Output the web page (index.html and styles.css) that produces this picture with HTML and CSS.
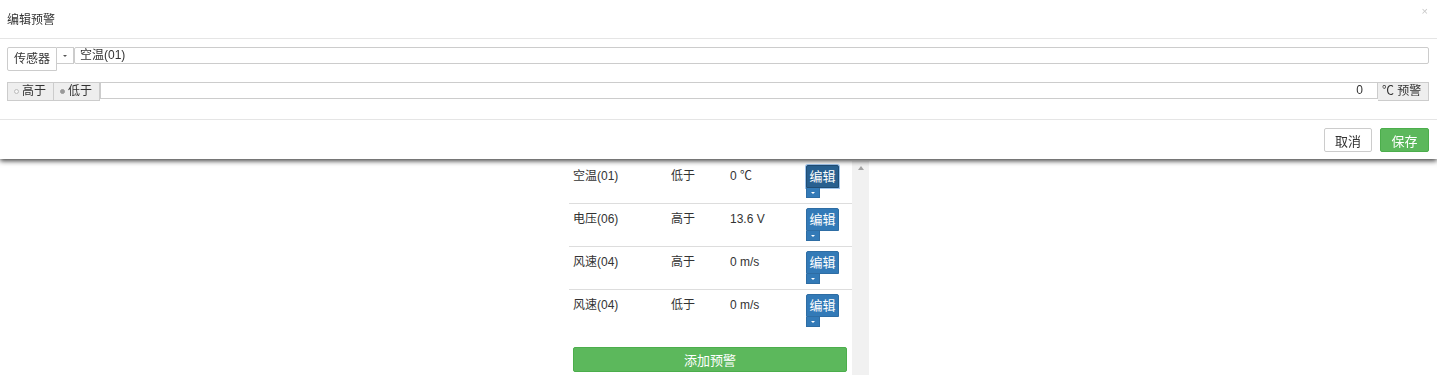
FILE: index.html
```html
<!DOCTYPE html>
<html lang="zh">
<head>
<meta charset="utf-8">
<title>编辑预警</title>
<link rel="stylesheet" href="styles.css">
</head>
<body>
<div class="page">
  <div class="panel">
    <div class="list">
      <div class="row">
        <span class="c-name">空温(01)</span><span class="c-cond">低于</span><span class="c-val">0 ℃</span>
        <div class="c-act"><button class="edit focus">编辑</button><button class="caret"><i></i></button></div>
      </div>
      <div class="row">
        <span class="c-name">电压(06)</span><span class="c-cond">高于</span><span class="c-val">13.6 V</span>
        <div class="c-act"><button class="edit">编辑</button><button class="caret"><i></i></button></div>
      </div>
      <div class="row">
        <span class="c-name">风速(04)</span><span class="c-cond">高于</span><span class="c-val">0 m/s</span>
        <div class="c-act"><button class="edit">编辑</button><button class="caret"><i></i></button></div>
      </div>
      <div class="row last">
        <span class="c-name">风速(04)</span><span class="c-cond">低于</span><span class="c-val">0 m/s</span>
        <div class="c-act"><button class="edit">编辑</button><button class="caret"><i></i></button></div>
      </div>
      <button class="add">添加预警</button>
    </div>
    <div class="scrollbar"><span class="up"></span></div>
  </div>
</div>

<div class="modal">
  <div class="modal-header">
    <span class="modal-title">编辑预警</span>
    <span class="close">×</span>
  </div>
  <div class="modal-body">
    <div class="line1">
      <button class="btn-sensor">传感器</button>
      <button class="btn-drop"><i></i></button>
      <div class="input sensor-input">空温(01)</div>
    </div>
    <div class="line2">
      <span class="addon radio-addon"><span class="dot"></span>高于</span>
      <span class="addon radio-addon second"><span class="dot on"></span>低于</span>
      <div class="input value-input">0</div>
      <span class="addon unit">℃ 预警</span>
    </div>
  </div>
  <div class="modal-footer">
    <button class="btn-cancel">取消</button>
    <button class="btn-save">保存</button>
  </div>
</div>
</body>
</html>
```

FILE: styles.css
```css
* { box-sizing: border-box; }
html, body { margin: 0; padding: 0; background: #fff; }
body {
  font-family: "Liberation Sans", "Noto Sans CJK SC", sans-serif;
  font-size: 12px;
  color: #333;
  height: 375px;
  overflow: hidden;
}
button { font-family: inherit; font-size: 12px; margin: 0; cursor: pointer; }

/* background page */
.page { padding-top: 161px; }
.panel {
  width: 301px;
  margin: 0 auto;
  display: flex;
  height: 214px;
}
.list {
  width: 284px;
  padding-left: 0;
  display: flex;
  flex-direction: column;
}
.row {
  display: grid;
  grid-template-columns: 98px 59px 76px 1fr;
  padding: 4px 0 5px 4px;
  border-bottom: 1px solid #ddd;
  line-height: 17px;
  margin-left: 1px;
}
.row.last { border-bottom: none; }
.row span { padding-top: 3px; }
.c-act { display: flex; flex-direction: column; align-items: flex-start; }
.edit {
  width: 33px; height: 23px;
  background: #337ab7;
  border: 1px solid #2e6da4;
  border-radius: 2px 2px 0 0;
  color: #fff;
  padding: 0;
  line-height: 20px;
  font-size: 13px;
}
.edit.focus { background: #286090; border-color: #204d74; box-shadow: 0 0 0 1px #9ec5ee; }
.caret {
  width: 14px; height: 10px;
  background: #337ab7;
  border: 1px solid #2e6da4;
  border-top: none;
  padding: 0;
  display: flex; align-items: center; justify-content: center;
}
.caret i, .btn-drop i {
  display: block; width: 0; height: 0;
  border-left: 2px solid transparent;
  border-right: 2px solid transparent;
  border-top: 2px solid #fff;
}
.add {
  margin: 15px 5px 0 5px;
  height: 25px;
  background: #5cb85c;
  border: 1px solid #4cae4c;
  border-radius: 2px;
  color: #fff;
  font-size: 13px;
}
.scrollbar {
  width: 17px;
  background: #f1f1f1;
  position: relative;
}
.scrollbar .up {
  position: absolute;
  left: 6px; top: 5px;
  width: 0; height: 0;
  border-left: 3px solid transparent;
  border-right: 3px solid transparent;
  border-bottom: 4px solid #a3a3a3;
}

/* modal overlay */
.modal {
  position: fixed;
  top: 0; left: 0; right: 0;
  background: #fff;
  box-shadow: 0 2px 5px rgba(0,0,0,0.75);
}
.modal-header {
  height: 39px;
  border-bottom: 1px solid #e5e5e5;
  display: flex;
  align-items: center;
  padding: 0 0 2px 7px;
  position: relative;
}
.modal-title { font-size: 12px; color: #333; }
.close {
  position: absolute;
  right: 9px; top: 5px;
  font-size: 11px;
  color: #c8c8c8;
}
.modal-body { padding: 8px 8px 18px 7px; }
.line1 { display: flex; align-items: flex-start; height: 24px; }
.btn-sensor {
  width: 50px; height: 24px;
  background: #fff;
  border: 1px solid #ccc;
  border-radius: 2px 0 0 2px;
  color: #333;
  padding: 0;
  line-height: 22px;
}
.btn-drop {
  width: 17px; height: 17px;
  background: #fff;
  border: 1px solid #ccc;
  border-left: none;
  padding: 0;
  display: flex; align-items: center; justify-content: center;
}
.btn-drop i { border-top-color: #555; }
.input {
  height: 17px;
  border: 1px solid #ccc;
  border-radius: 2px;
  line-height: 15px;
  padding: 0 5px;
  background: #fff;
  color: #333;
}
.sensor-input { flex: 1; }
.line2 { display: flex; align-items: flex-start; margin-top: 11px; height: 19px; }
.addon {
  height: 19px;
  background: #eee;
  border: 1px solid #ccc;
  line-height: 17px;
  display: flex;
  align-items: center;
  color: #333;
}
.radio-addon { width: 47px; padding-left: 6px; }
.radio-addon.second { width: 46px; border-left: none; }
.dot {
  width: 5px; height: 5px;
  border-radius: 50%;
  border: 1px solid #bbb;
  background: #f6f6f6;
  margin-right: 3px;
}
.dot.on { background: #999; border-color: #999; }
.value-input { flex: 1; text-align: right; padding-right: 14px; border-radius: 0; }
.unit { width: 51px; padding-left: 4px; border-left: none; }
.modal-footer {
  border-top: 1px solid #e5e5e5;
  padding: 8px 8px 7px;
  display: flex;
  justify-content: flex-end;
  gap: 8px;
}
.btn-cancel, .btn-save {
  height: 24px;
  border-radius: 2px;
  padding: 0;
  font-size: 13px;
}
.btn-cancel { width: 48px; background: #fff; border: 1px solid #ccc; color: #333; }
.btn-save { width: 49px; background: #5cb85c; border: 1px solid #4cae4c; color: #fff; }
```
